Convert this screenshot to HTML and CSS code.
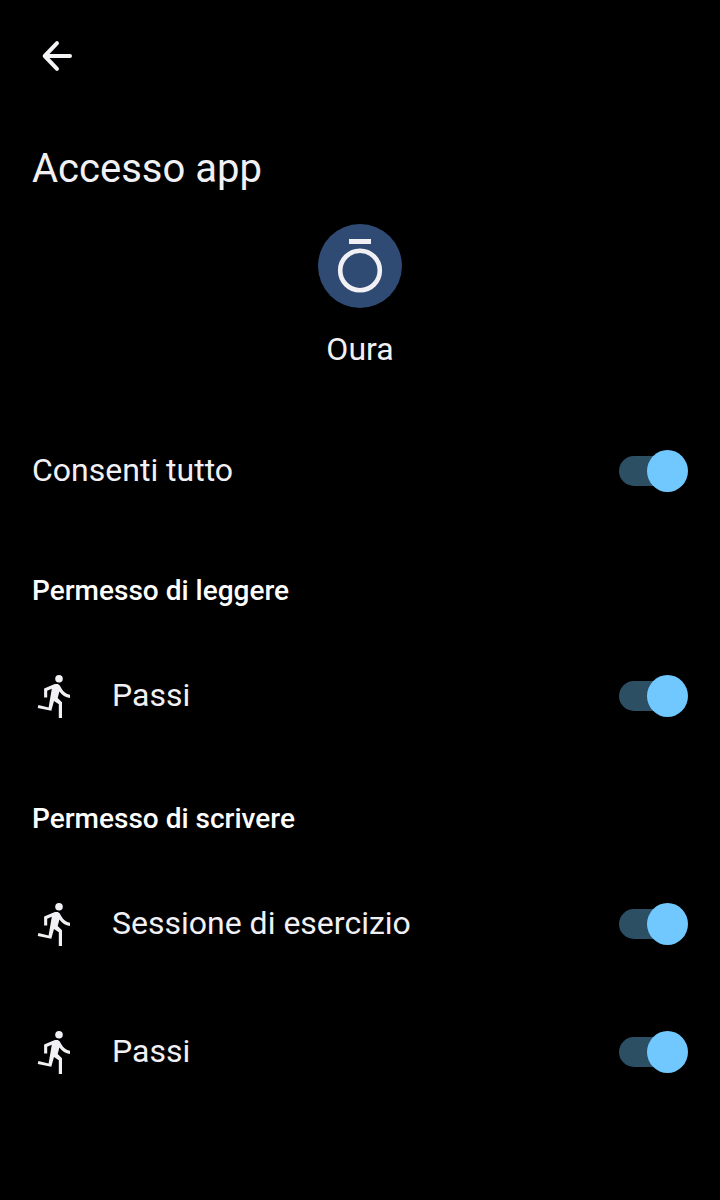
FILE: index.html
```html
<!DOCTYPE html>
<html lang="it">
<head>
  <meta charset="UTF-8" />
  <meta name="viewport" content="width=device-width, initial-scale=1.0"/>
  <title>Accesso app</title>
  <link rel="stylesheet" href="styles.css">
</head>
<body>
  <svg class="defs" width="0" height="0">
    <symbol id="run" viewBox="0 0 48 48">
      <circle cx="27" cy="6.7" r="3.8" />
      <path d="M21.6 12.4L12.1 16.5V25.4H15.2V18.7L19.8 16.8 16.6 35.4 6.4 33 5.7 36 19.3 38.8 22 29 26.8 32.2V46H30V30.2L25.7 26.1 27.4 19.4C30 22.9 33.5 25.4 38 26V22.8C34 21.9 31.3 19.5 29.5 16.4L27.9 13.8C27.1 12.6 26.1 12 24.7 12 23.6 12 22.6 12 21.6 12.4z"/>
    </symbol>
  </svg>

  <header>
    <button class="back" aria-label="Indietro">
      <svg width="48" height="48" viewBox="0 0 48 48">
        <path d="M25 11.2L12.7 24 25 36.8M13 24h25" />
      </svg>
    </button>
  </header>

  <main>
    <h1>Accesso app</h1>

    <div class="app">
      <svg width="84" height="84" viewBox="0 0 84 84">
        <circle cx="42" cy="42" r="42" fill="#2f4b73" />
        <rect x="31" y="15" width="22" height="5" fill="#f1f1f5" />
        <circle cx="42" cy="46.5" r="19.8" fill="none" stroke="#f1f1f5" stroke-width="4.6" />
      </svg>
      <div class="app-name">Oura</div>
    </div>

    <div class="row allow-all">
      <span class="label">Consenti tutto</span>
      <span class="switch"></span>
    </div>

    <h2>Permesso di leggere</h2>
    <div class="row">
      <svg class="icon"><use href="#run" /></svg>
      <span class="label">Passi</span>
      <span class="switch"></span>
    </div>

    <h2>Permesso di scrivere</h2>
    <div class="row">
      <svg class="icon"><use href="#run" /></svg>
      <span class="label">Sessione di esercizio</span>
      <span class="switch"></span>
    </div>
    <div class="row">
      <svg class="icon"><use href="#run" /></svg>
      <span class="label">Passi</span>
      <span class="switch"></span>
    </div>
  </main>
</body>
</html>
```
FILE: styles.css
```css
* {
  box-sizing: border-box;
}

body {
  margin: 0;
  min-height: 100vh;
  background: #000;
  color: #f1f1f5;
  font-family: Roboto, sans-serif;
  font-size: 32px;
}

.defs {
  display: block;
}

header {
  height: 112px;
  padding: 32px;
}

.back {
  display: block;
  padding: 0;
  border: none;
  background: none;
  cursor: pointer;
}

.back svg {
  display: block;
  fill: none;
  stroke: #f5f5f7;
  stroke-width: 4;
  stroke-linecap: round;
  stroke-linejoin: round;
}

main {
  padding: 0 32px;
}

h1 {
  height: 112px;
  margin: 0;
  line-height: 114px;
  font-size: 40px;
  font-weight: 400;
}

.app {
  display: flex;
  flex-direction: column;
  align-items: center;
  height: 186px;
}

.app-name {
  margin-top: 22px;
  line-height: 38px;
}

.row {
  display: flex;
  align-items: center;
  height: 128px;
}

.allow-all {
  height: 122px;
}

h2 {
  height: 100px;
  margin: 0;
  padding-top: 42px;
  line-height: 33px;
  font-size: 28px;
  font-weight: 500;
  color: #fff;
}

.icon {
  width: 48px;
  height: 48px;
  margin-right: 32px;
  fill: #f1f1f5;
}

.label {
  flex: 1;
  padding-bottom: 2px;
  line-height: 38px;
}

.switch {
  position: relative;
  width: 69px;
  height: 42px;
}

.switch::before,
.switch::after {
  content: "";
  position: absolute;
}

.switch::before {
  left: 0;
  top: 6px;
  width: 56px;
  height: 30px;
  border-radius: 15px;
  background: #2d4f63;
}

.switch::after {
  right: 0;
  top: 0;
  width: 41px;
  height: 42px;
  border-radius: 50%;
  background: #71c8ff;
}
```
